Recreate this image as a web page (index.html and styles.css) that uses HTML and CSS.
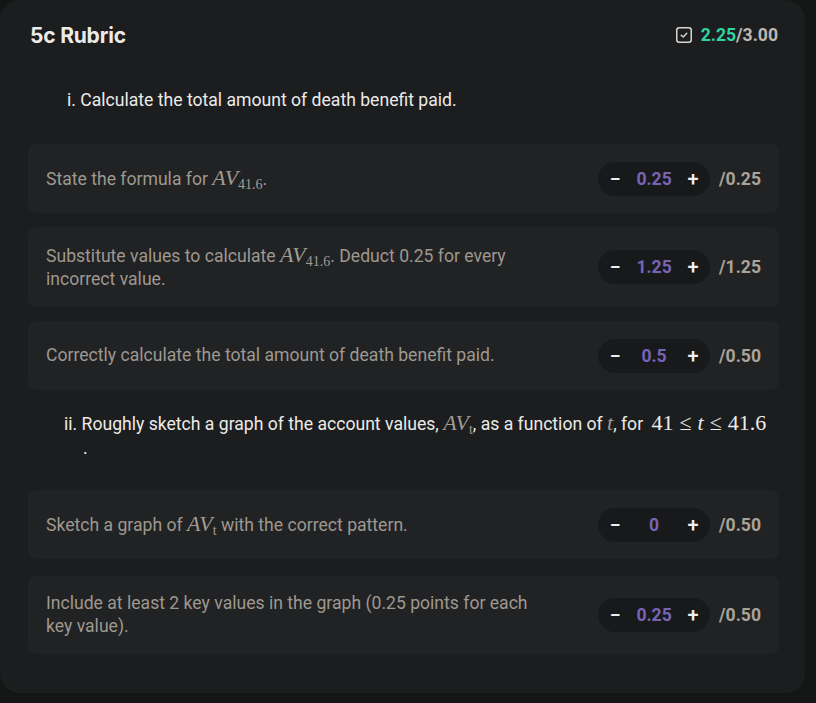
FILE: index.html
```html
<!DOCTYPE html>
<html>
<head>
<meta charset="utf-8">
<link rel="stylesheet" href="styles.css">
</head>
<body>
<div class="card">
  <div class="header">
    <div class="title">5c Rubric</div>
    <div class="score">
      <svg class="check" width="16" height="16" viewBox="0 0 16 16"><rect x="0.75" y="0.75" width="14.5" height="14.5" rx="2.5" fill="none" stroke="#d9d6d0" stroke-width="1.5"/><path d="M5.2 8.2 L7.2 10 L10.8 6.2" fill="none" stroke="#d9d6d0" stroke-width="1.4" stroke-linecap="round" stroke-linejoin="round"/></svg>
      <span class="got">2.25</span><span class="total">/3.00</span>
    </div>
  </div>

  <div class="section sec-i">i. Calculate the total amount of death benefit paid.</div>

  <div class="rows">
    <div class="row">
      <div class="desc">State the formula for <span class="m">AV<sub>41.6</sub></span>.</div>
      <div class="ctrl"><div class="pill"><span class="op">−</span><span class="val">0.25</span><span class="op">+</span></div><span class="max">/0.25</span></div>
    </div>
    <div class="row">
      <div class="desc">Substitute values to calculate <span class="m">AV<sub>41.6</sub></span>. Deduct 0.25 for every incorrect value.</div>
      <div class="ctrl"><div class="pill"><span class="op">−</span><span class="val">1.25</span><span class="op">+</span></div><span class="max">/1.25</span></div>
    </div>
    <div class="row">
      <div class="desc">Correctly calculate the total amount of death benefit paid.</div>
      <div class="ctrl"><div class="pill"><span class="op">−</span><span class="val">0.5</span><span class="op">+</span></div><span class="max">/0.50</span></div>
    </div>
  </div>

  <div class="section sec-ii">ii. Roughly sketch a graph of the account values, <span class="m">AV<sub>t</sub></span>, as a function of <span class="m">t</span>, for <span class="dm">41<span class="rel">≤</span><i>t</i><span class="rel">≤</span>41.6</span><span class="dot">.</span></div>

  <div class="rows rows-b">
    <div class="row">
      <div class="desc">Sketch a graph of <span class="m">AV<sub>t</sub></span> with the correct pattern.</div>
      <div class="ctrl"><div class="pill"><span class="op">−</span><span class="val">0</span><span class="op">+</span></div><span class="max">/0.50</span></div>
    </div>
    <div class="row">
      <div class="desc">Include at least 2 key values in the graph (0.25 points for each key value).</div>
      <div class="ctrl"><div class="pill"><span class="op">−</span><span class="val">0.25</span><span class="op">+</span></div><span class="max">/0.50</span></div>
    </div>
  </div>
</div>
</body>
</html>
```
FILE: styles.css
```css
html, body {
  margin: 0;
  padding: 0;
  background: #141615;
}
body {
  font-family: Roboto, "Liberation Sans", sans-serif;
  width: 816px;
  height: 703px;
  overflow: hidden;
}
.card {
  width: 805px;
  height: 693px;
  box-sizing: border-box;
  background: #1c1d1f;
  border-radius: 20px;
  padding: 22px 26px 0 28px;
}
.header {
  display: flex;
  justify-content: space-between;
  align-items: center;
  height: 26px;
  padding-left: 2px;
  padding-right: 1px;
}
.title {
  font-family: Inter, "Liberation Sans", sans-serif;
  font-weight: 700;
  font-size: 21px;
  color: #ecebe8;
  letter-spacing: -0.2px;
}
.score {
  display: flex;
  align-items: center;
  font-size: 17.6px;
  font-weight: 700;
}
.check { margin-right: 9px; }
.got { color: #2fd4a0; }
.total { color: #bdb8b0; }

.section {
  color: #ecebe8;
  font-size: 17.6px;
  line-height: 23px;
}
.sec-i {
  padding: 41px 0 32px 39px;
}
.sec-ii {
  padding: 21px 0 30px 36px;
  line-height: 24px;
}
.dm {
  font-family: "Liberation Serif", serif;
  font-size: 22px;
  margin-left: 4px;
}
.dm i { font-style: italic; }
.rel { margin: 0 6px; }
.dot {
  display: block;
  padding-left: 19px;
  line-height: 24px;
}

.rows {
  display: flex;
  flex-direction: column;
  gap: 14px;
}
.rows-b { gap: 17px; }
.row {
  display: flex;
  align-items: center;
  justify-content: space-between;
  background: #212224;
  border-radius: 8px;
  padding: 16px 18px;
  min-height: 37px;
}
.desc {
  color: #9e988f;
  font-size: 17.6px;
  line-height: 23px;
  max-width: 500px;
}
.m {
  font-family: "Liberation Serif", serif;
  font-style: italic;
  font-size: 22px;
  color: #a29c93;
}
.m sub {
  font-style: normal;
  font-size: 14px;
  vertical-align: -4px;
  line-height: 0;
}
.ctrl {
  display: flex;
  align-items: center;
  gap: 9px;
}
.pill {
  display: flex;
  align-items: center;
  justify-content: space-between;
  width: 112px;
  height: 34px;
  box-sizing: border-box;
  padding: 0 10px;
  background: #18191a;
  border-radius: 17px;
}
.op {
  color: #efefef;
  font-size: 20px;
  font-weight: 500;
  width: 14px;
  text-align: center;
}
.val {
  color: #7764b6;
  font-weight: 700;
  font-size: 17.6px;
}
.max {
  color: #a9a399;
  font-weight: 700;
  font-size: 17.6px;
}
```
